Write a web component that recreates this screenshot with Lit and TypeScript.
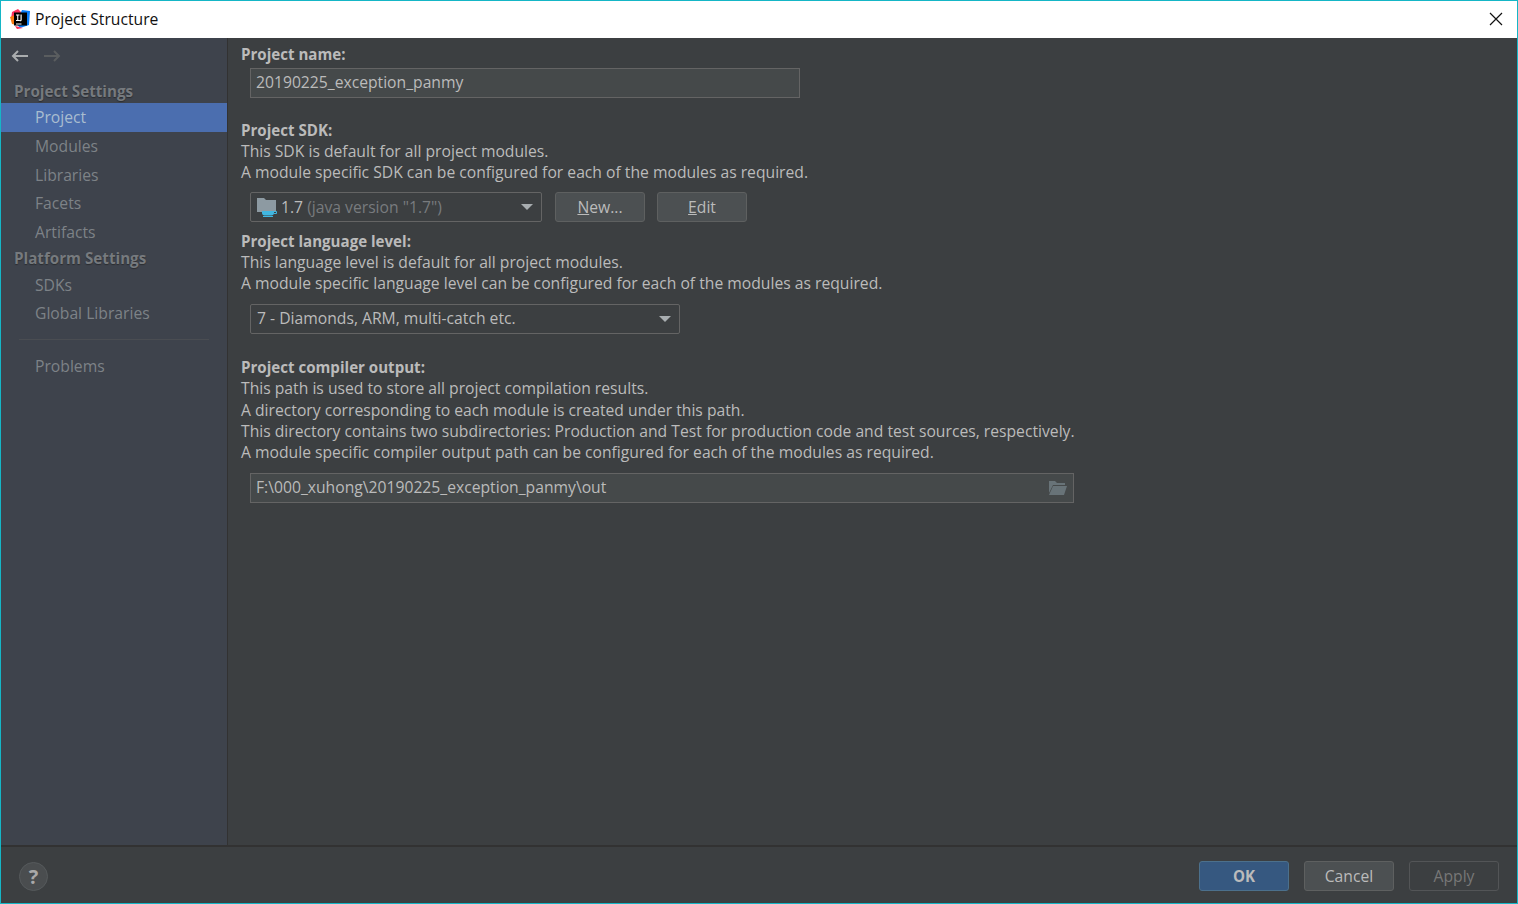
import { LitElement, html, css } from "lit";
import { customElement } from "lit/decorators.js";

const arrow = (color: string, flip: boolean) => html`<svg style="transform:${flip ? "scaleX(-1)" : "none"}" width="17" height="12" viewBox="0 0 17 12" fill="none" stroke="${color}" stroke-width="2"><path d="M17 6H2M7 1L2 6l5 5"/></svg>`;

const appIcon = html`<svg width="20" height="20" viewBox="0 0 20 20">
  <path d="M2 3 L8 0 L12 4 L6 12 L1 10Z" fill="#fe315d"/>
  <path d="M0 8 L5 6 L7 16 L2 15Z" fill="#f97a12"/>
  <path d="M12 1 L20 2 L19 16 L10 19 L6 14Z" fill="#087cfa"/>
  <path d="M5 17 L13 19 L7 20Z" fill="#fe2857"/>
  <rect x="4" y="3.500" width="13" height="13" fill="#000"/>
  <path d="M6 14.500h5.500v1H6z" fill="#fff"/>
  <path d="M6 5.500h3.500v1H8.300v4.500H9.500v1H6v-1h1.200V6.500H6zM10.500 5.500h1.200v5.200c0 1-.7 1.500-1.500 1.500-.6 0-1.100-.2-1.300-.5l.6-.8c.2.200.4.300.6.300.3 0 .4-.2.400-.5z" fill="#fff"/>
</svg>`;

const sdkIcon = html`<svg width="21" height="20" viewBox="0 0 21 20">
  <path d="M0 1h7l2 2h10v12H0z" fill="#8d9aa2"/>
  <path d="M5 14h12v2c0 1.500-1 2.500-2.500 2.500h-7C6 18.500 5 17.500 5 16z" fill="#40b6e0"/>
  <path d="M17 14.500h2.500v2H17" fill="none" stroke="#40b6e0" stroke-width="1"/>
  <path d="M6 19.500h10" stroke="#40b6e0" stroke-width="1"/>
</svg>`;

const caret = html`<svg class="caret" width="12" height="6" viewBox="0 0 12 6"><path d="M0 0h12L6 6z" fill="#a8adb0"/></svg>`;

const folder = html`<svg class="folder" width="20" height="16" viewBox="0 0 20 16">
  <path d="M1 1h6l2 2h8v2H5L1 13z" fill="#687378"/>
  <path d="M5 6h14l-3 9H1z" fill="#687378"/>
</svg>`;

@customElement("app-root")
export class AppRoot extends LitElement {
  static styles = css`
    :host {
      display: block;
      width: 1518px;
      height: 904px;
      font-family: "Open Sans", "Noto Sans", sans-serif;
      font-size: 15.700px;
      color: #bbbbbb;
    }
    .win {
      box-sizing: border-box;
      width: 1518px;
      height: 904px;
      border: 1px solid #15b6c6;
      display: flex;
      flex-direction: column;
      background: #3c3f41;
    }
    .title {
      box-sizing: border-box;
      height: 37px;
      flex: none;
      background: #fff;
      color: #111;
      display: flex;
      align-items: center;
      padding: 0 13px 2px 9px;
      gap: 5px;
    }
    .title .name { flex: 1; }
    .body { flex: 1; display: flex; min-height: 0; }
    .side {
      box-sizing: border-box;
      width: 227px;
      flex: none;
      background: #3e434c;
      border-right: 1px solid #323232;
      display: flex;
      flex-direction: column;
      color: #7d8287;
    }
    .nav { height: 34px; display: flex; align-items: center; gap: 16px; padding: 1px 0 0 10px; box-sizing: border-box; flex: none; }
    .head {
      font-weight: 700;
      font-size: 15.200px;
      color: #767a7e;
      padding-left: 13px;
      text-shadow: 0 1px 1px #2b2d31;
    }
    .h1 { margin-top: 5px; height: 26px; line-height: 28px; }
    .h2 { height: 24.300px; line-height: 24px; }
    .item { padding-left: 34px; height: 28.600px; line-height: 28.600px; }
    .item.sel { background: #4b6eaf; color: #a9bdd0; height: 29px; line-height: 29px; }
    .sep {
      height: 1px;
      margin: 11px 18px 12px 18px;
      background: #4a4d52;
    }
    .main { flex: 1; padding-left: 13px; min-width: 0; }
    .line { height: 21px; line-height: 21px; white-space: nowrap; }
    .b { font-weight: 700; font-size: 15.100px; }
    .first { margin-top: 6px; }
    .gap { margin-top: 22px; }
    .gap2 { margin-top: 23px; }
    .push { margin-top: 1px; }
    .field {
      box-sizing: border-box;
      height: 30px;
      margin-left: 9px;
      border: 1px solid #646464;
      background: #45494a;
      display: flex;
      align-items: center;
      padding: 0 5px 2px;
      justify-content: space-between;
    }
    .name-field { width: 550px; margin-top: 3px; }
    .out-field { width: 824px; margin-top: 10px; }
    .folder { margin-top: 2px; }
    .combo {
      box-sizing: border-box;
      height: 30px;
      border: 1px solid #646464;
      border-radius: 2px;
      background: #3c3f41;
      display: flex;
      align-items: center;
      padding: 0 8px 2px 6px;
      justify-content: space-between;
    }
    .caret { margin-top: 1px; }
    .sdk-combo { width: 292px; padding-bottom: 1px; }
    .lang-combo { width: 430px; margin: 10px 0 0 9px; }
    .sdkrow { display: flex; margin: 9px 0 9px 9px; }
    .sdkleft { display: flex; align-items: center; gap: 3px; }
    .dim { color: #787b7e; }
    .btn {
      box-sizing: border-box;
      width: 90px;
      height: 30px;
      border: 1px solid #5e6060;
      border-radius: 3px;
      background: #4c5052;
      display: flex;
      align-items: center;
      justify-content: center;
      font-family: inherit;
      font-size: inherit;
      color: #bbbbbb;
      padding: 0;
    }
    .new { margin-left: 13px; }
    .edit { margin-left: 12px; }
    .btn.ok { background: #365880; border-color: #4c708c; font-weight: 700; font-size: 15.100px; }
    .btn.off { background: #3c3f41; border-color: #535557; color: #777777; }
    .foot {
      box-sizing: border-box;
      height: 58px;
      flex: none;
      border-top: 2px solid #323232;
      display: flex;
      align-items: center;
      gap: 15px;
      padding: 2px 18px 0;
    }
    .help {
      box-sizing: border-box;
      width: 29px;
      height: 29px;
      border-radius: 50%;
      background: #4a4d4f;
      border: 1px solid #565a5c;
      display: flex;
      align-items: center;
      justify-content: center;
      font-weight: 700;
      font-size: 20px;
      color: #a9a9a9;
      margin-right: auto;
    }
  `;

  render() {
    return html`<div class="win">
      <div class="title">
        ${appIcon}
        <span class="name">Project Structure</span>
        <svg width="16" height="16" viewBox="0 0 16 16" fill="none" stroke="#111" stroke-width="1.200"><path d="M2 2l12 12M14 2L2 14"/></svg>
      </div>
      <div class="body">
        <div class="side">
          <div class="nav">${arrow("#a9acae", false)}${arrow("#5a5d5f", true)}</div>
          <div class="head h1">Project Settings</div>
          <div class="item sel">Project</div>
          <div class="item">Modules</div>
          <div class="item">Libraries</div>
          <div class="item">Facets</div>
          <div class="item">Artifacts</div>
          <div class="head h2">Platform Settings</div>
          <div class="item">SDKs</div>
          <div class="item">Global Libraries</div>
          <div class="sep"></div>
          <div class="item">Problems</div>
        </div>
        <div class="main">
          <div class="line b first">Project name:</div>
          <div class="field name-field">20190225_exception_panmy</div>
          <div class="line b gap">Project SDK:</div>
          <div class="line">This SDK is default for all project modules.</div>
          <div class="line">A module specific SDK can be configured for each of the modules as required.</div>
          <div class="sdkrow">
            <div class="combo sdk-combo">
              <span class="sdkleft">${sdkIcon}<span>1.7 <span class="dim">(java version "1.7")</span></span></span>${caret}
            </div>
            <button class="btn new"><span><u>N</u>ew...</span></button>
            <button class="btn edit"><span><u>E</u>dit</span></button>
          </div>
          <div class="line b">Project language level:</div>
          <div class="line">This language level is default for all project modules.</div>
          <div class="line">A module specific language level can be configured for each of the modules as required.</div>
          <div class="combo lang-combo">7 - Diamonds, ARM, multi-catch etc.${caret}</div>
          <div class="line b gap2">Project compiler output:</div>
          <div class="line">This path is used to store all project compilation results.</div>
          <div class="line push">A directory corresponding to each module is created under this path.</div>
          <div class="line">This directory contains two subdirectories: Production and Test for production code and test sources, respectively.</div>
          <div class="line">A module specific compiler output path can be configured for each of the modules as required.</div>
          <div class="field out-field">F:\\000_xuhong\\20190225_exception_panmy\\out${folder}</div>
        </div>
      </div>
      <div class="foot">
        <div class="help">?</div>
        <button class="btn ok">OK</button>
        <button class="btn">Cancel</button>
        <button class="btn off">Apply</button>
      </div>
    </div>`;
  }
}
